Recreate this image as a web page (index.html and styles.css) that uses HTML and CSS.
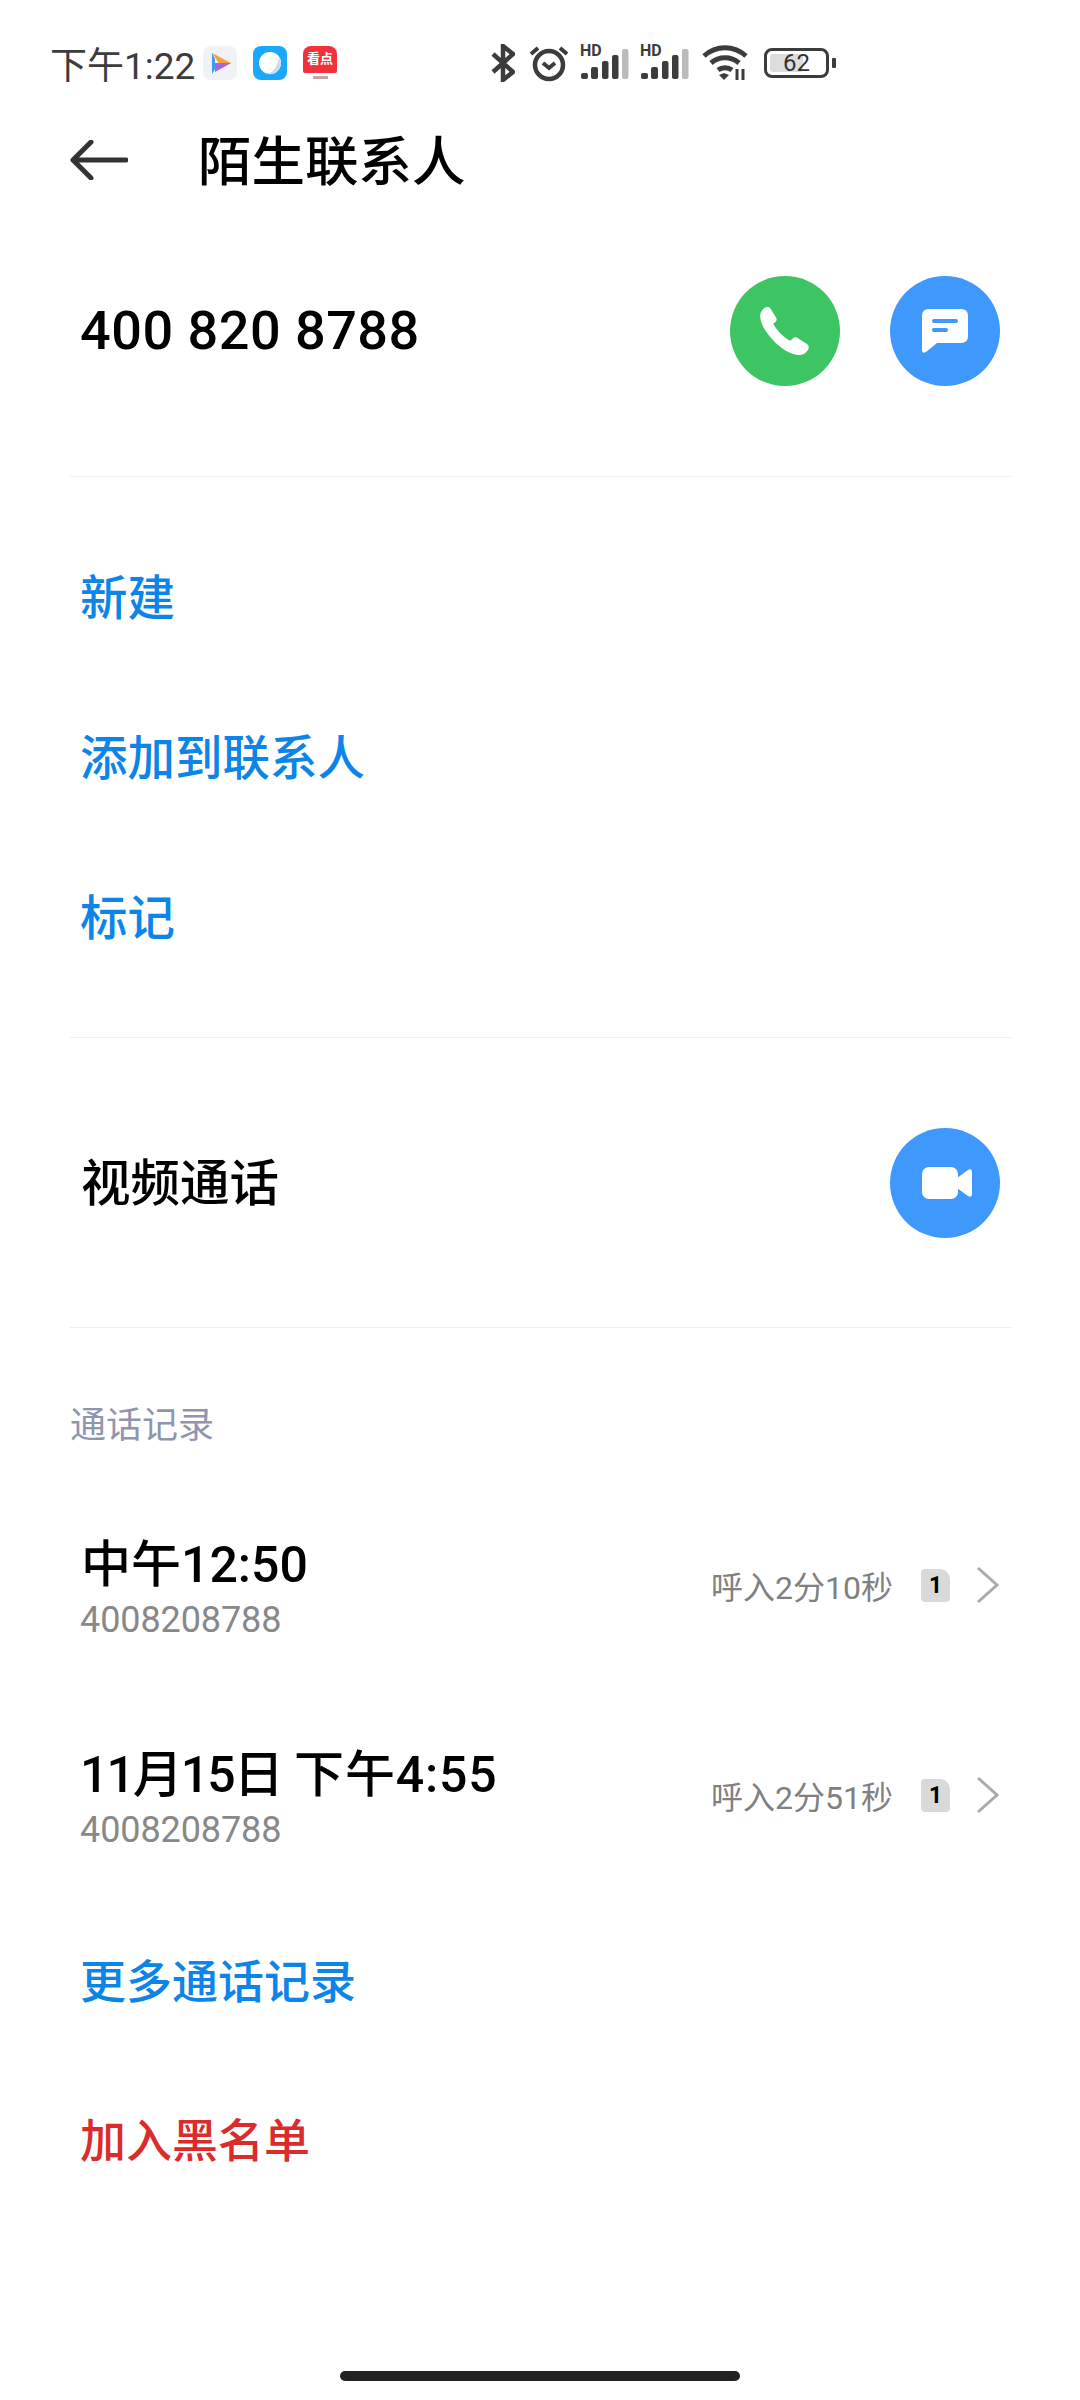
FILE: index.html
```html
<!DOCTYPE html>
<html lang="zh-CN">
<head>
    <meta charset="UTF-8">
    <meta name="viewport" content="width=device-width, initial-scale=1.0">
    <title>陌生联系人</title>
    <link rel="stylesheet" href="styles.css">
</head>
<body>
    <div class="page">
        <div class="status-bar">
            <span class="status-time">下午1:22</span>
            <svg class="app-icon play" width="34" height="34" viewBox="0 0 34 34">
                <rect width="34" height="34" rx="8" fill="#f0f2f5"/>
                <path d="M9 7l19 10-9 5z" fill="#f7a13c"/>
                <path d="M9 7l3 6v10l-3 5z" fill="#3aa0ee"/>
                <path d="M12 17l16 0-16 9z" fill="#a266ee"/>
            </svg>
            <svg class="app-icon browser" width="34" height="34" viewBox="0 0 34 34">
                <rect width="34" height="34" rx="8" fill="#1aa8fb"/>
                <circle cx="17" cy="17" r="11" fill="#fff"/>
                <path d="M26 11a11 11 0 0 1-11 17c6-2 10-9 11-17z" fill="#c5def3"/>
            </svg>
            <div class="app-icon news">
                <span class="news-top">看点</span>
                <span class="news-bottom"></span>
            </div>

            <div class="status-icons">
                <svg width="24" height="38" viewBox="0 0 24 38" fill="none" stroke="#3c3c3c" stroke-width="4.5">
                    <path d="M2 10l20 18-10 8V2l10 8L2 28"/>
                </svg>
                <svg class="alarm" width="40" height="38" viewBox="0 0 40 38" fill="none" stroke="#3c3c3c" stroke-width="4.5">
                    <circle cx="20" cy="21" r="14"/>
                    <path d="M14 19l6 5 6-5" stroke-width="4"/>
                    <path d="M2 10l7-6M38 10l-7-6" stroke-width="4"/>
                </svg>
                <div class="signal">
                    <span class="hd">HD</span>
                    <svg width="48" height="30" viewBox="0 0 48 30">
                        <rect x="0" y="24" width="7" height="6" rx="2" fill="#3c3c3c"/>
                        <rect x="10" y="18" width="7" height="12" rx="2" fill="#3c3c3c"/>
                        <rect x="21" y="12" width="6.5" height="18" rx="2" fill="#3c3c3c"/>
                        <rect x="31" y="6" width="6.5" height="24" rx="2" fill="#3c3c3c"/>
                        <rect x="41" y="0" width="6.5" height="30" rx="2" fill="#bbb"/>
                    </svg>
                </div>
                <div class="signal">
                    <span class="hd">HD</span>
                    <svg width="48" height="30" viewBox="0 0 48 30">
                        <rect x="0" y="24" width="7" height="6" rx="2" fill="#3c3c3c"/>
                        <rect x="10" y="18" width="7" height="12" rx="2" fill="#3c3c3c"/>
                        <rect x="21" y="12" width="6.5" height="18" rx="2" fill="#3c3c3c"/>
                        <rect x="31" y="6" width="6.5" height="24" rx="2" fill="#3c3c3c"/>
                        <rect x="41" y="0" width="6.5" height="30" rx="2" fill="#bbb"/>
                    </svg>
                </div>
                <svg class="wifi" width="46" height="36" viewBox="0 0 46 36" fill="none" stroke="#3c3c3c" stroke-width="5">
                    <path d="M2 11c12-11 30-11 42 0"/>
                    <path d="M9 18c8-7 20-7 28 0"/>
                    <path d="M16 25c4-3 10-3 14 0"/>
                    <path d="M17 30l5-2 5 2-5 5z" fill="#3c3c3c" stroke="none"/>
                    <path d="M35 24v11M41 24v11" stroke-width="3"/>
                </svg>
                <div class="battery">
                    <div class="battery-body">
                        <div class="battery-fill"></div>
                        <span class="battery-text">62</span>
                    </div>
                    <div class="battery-cap"></div>
                </div>
            </div>
        </div>

        <div class="header">
            <svg class="back" width="58" height="40" viewBox="0 0 58 40" fill="none" stroke="#333" stroke-width="5" stroke-linecap="round" stroke-linejoin="round">
                <path d="M21 2L3 20l18 18M3 20h53"/>
            </svg>
            <h1 class="title">陌生联系人</h1>
        </div>

        <div class="number-row">
            <span class="number">400 820 8788</span>
            <div class="circle green">
                <svg width="50" height="50" viewBox="0 0 51 51">
                    <path d="M2.5 4C5 .5 9 0 11 3l5.5 9c1 2 .5 3.500-1.500 5l-1.500 1c3 6 9.500 13 17.500 17.500l2.500-2.500c1.500-1.200 3-1.300 4.500-.5l9.500 6c2.500 1.500 3 4.500 1 7-2.500 3.500-6 5-10 4.500-9.500-1-19.500-8.500-26.500-16.500C5.500 26 .5 18 .2 11 0 8 1 6 2.500 4z" fill="#fff"/>
                </svg>
            </div>
            <div class="circle blue">
                <svg width="46" height="44" viewBox="0 0 46 44">
                    <path d="M7 0h32q7 0 7 7v20q0 7-7 7H15L4 43q-4 2-4-2V7q0-7 7-7z" fill="#fff"/>
                    <path d="M12 12h22M12 21h12" stroke="#3f98fb" stroke-width="4" stroke-linecap="round"/>
                </svg>
            </div>
        </div>

        <div class="links section">
            <div class="link-row blue-text large">新建</div>
            <div class="link-row blue-text large">添加到联系人</div>
            <div class="link-row blue-text large">标记</div>
        </div>

        <div class="video-row section">
            <span class="video-label">视频通话</span>
            <div class="circle blue">
                <svg class="video-icon" width="50" height="32" viewBox="0 0 50 32">
                    <rect width="36" height="32" rx="7" fill="#fff"/>
                    <path d="M35 11l11-8q4-2 4 2v22q0 4-4 2l-11-8z" fill="#fff"/>
                </svg>
            </div>
        </div>

        <div class="history section">
            <div class="history-title">通话记录</div>

            <div class="call-row">
                <div class="call-info">
                    <div class="call-time first">中午12:50</div>
                    <div class="call-number">4008208788</div>
                </div>
                <span class="call-duration">呼入2分10秒</span>
                <div class="sim">1</div>
                <svg class="chevron" width="24" height="38" viewBox="0 0 24 38" fill="none" stroke="#aaa" stroke-width="3">
                    <path d="M2 2l19 17L2 36"/>
                </svg>
            </div>

            <div class="call-row">
                <div class="call-info">
                    <div class="call-time"><span class="call-date">11月15日</span> <span class="call-clock">下午4:55</span></div>
                    <div class="call-number">4008208788</div>
                </div>
                <span class="call-duration">呼入2分51秒</span>
                <div class="sim">1</div>
                <svg class="chevron" width="24" height="38" viewBox="0 0 24 38" fill="none" stroke="#aaa" stroke-width="3">
                    <path d="M2 2l19 17L2 36"/>
                </svg>
            </div>

            <div class="link-row blue-text">更多通话记录</div>
            <div class="link-row red-text">加入黑名单</div>
        </div>

        <div class="home-bar"></div>
    </div>
</body>
</html>
```

FILE: styles.css
```css
* {
    box-sizing: border-box;
}
body {
    margin: 0;
    background-color: #fff;
    font-family: Roboto, "Noto Sans CJK SC", sans-serif;
    color: #000;
}
.page {
    width: 1080px;
    height: 2400px;
    display: flex;
    flex-direction: column;
    overflow: hidden;
}

/* status bar */
.status-bar {
    height: 126px;
    padding-left: 50px;
    display: flex;
    align-items: center;
}
.status-time {
    font-size: 37px;
    color: #3c3c3c;
    width: 153px;
}
.app-icon {
    width: 34px;
    height: 34px;
    margin-right: 16px;
    flex-shrink: 0;
}
.news {
    display: flex;
    flex-direction: column;
    align-items: center;
}
.news-top {
    width: 100%;
    height: 27px;
    background-color: #f1323c;
    border-radius: 8px 8px 2px 2px;
    font-size: 13px;
    line-height: 25px;
    font-weight: 700;
    text-align: center;
    color: #fff;
}
.news-bottom {
    width: 15px;
    height: 3px;
    margin-top: 3px;
    background-color: #c9a5a8;
}
.status-icons {
    margin-left: 138px;
    display: flex;
    align-items: center;
    color: #3c3c3c;
}
.alarm {
    margin-left: 14px;
}
.signal {
    margin-left: 11px;
    width: 49px;
    height: 36px;
    position: relative;
}
.signal + .signal {
    margin-left: 11px;
}
.signal svg {
    position: absolute;
    left: 1px;
    top: 4px;
}
.hd {
    position: absolute;
    left: 0;
    top: -3px;
    font-size: 16px;
    line-height: 18px;
    font-weight: 700;
}
.wifi {
    margin-left: 13px;
}
.battery {
    margin-left: 16px;
    display: flex;
    align-items: center;
}
.battery-body {
    width: 65px;
    height: 30px;
    border: 3px solid #3c3c3c;
    border-radius: 8px;
    padding: 3px;
    position: relative;
}
.battery-fill {
    width: 62%;
    height: 100%;
    background-color: #ddd;
    border-radius: 3px;
}
.battery-text {
    position: absolute;
    left: 0;
    right: 0;
    top: 0;
    text-align: center;
    font-size: 24px;
    line-height: 24px;
    color: #333;
}
.battery-cap {
    width: 4px;
    height: 10px;
    margin-left: 3px;
    background-color: #3c3c3c;
    border-radius: 1px;
}

/* header */
.header {
    height: 68px;
    padding-left: 70px;
    display: flex;
    align-items: center;
}
.title {
    margin: 0 0 6px 70px;
    font-size: 53.5px;
    font-weight: 500;
}

/* number row */
.number-row {
    height: 282px;
    padding: 0 80px 9px;
    display: flex;
    align-items: center;
}
.number {
    font-size: 54px;
    font-weight: 500;
    margin-right: auto;
    letter-spacing: .5px;
}
.circle {
    width: 110px;
    height: 110px;
    border-radius: 50%;
    display: flex;
    align-items: center;
    justify-content: center;
    flex-shrink: 0;
}
.green {
    background-color: #3ec563;
}
.blue {
    background-color: #3f98fb;
    margin-left: 50px;
}

/* sections */
.section {
    border-top: 1px solid #eee;
    margin: 0 69px 0 70px;
}
.links {
    padding: 40px 0;
}
.link-row {
    height: 160px;
    display: flex;
    align-items: center;
    padding: 0 0 5px 10px;
    font-size: 46px;
    font-weight: 500;
}
.large {
    font-size: 47.5px;
}
.blue-text {
    color: #0d84e8;
}
.red-text {
    color: #dc2b2b;
    height: 158px;
}
.video-row {
    height: 290px;
    display: flex;
    align-items: center;
    justify-content: space-between;
    padding: 0 11px 0 11px;
}
.video-label {
    font-size: 49.5px;
    font-weight: 500;
    margin-bottom: 6px;
}
.video-icon {
    margin-left: 4px;
}

/* history */
.history-title {
    margin-top: 70px;
    margin-bottom: 26px;
    font-size: 36px;
    line-height: 56px;
    color: #8e95ae;
}
.call-row {
    height: 210px;
    display: flex;
    align-items: center;
    padding-left: 10px;
}
.call-info {
    margin-right: auto;
    margin-top: 6px;
}
.call-time {
    font-size: 50px;
    line-height: 60px;
    font-weight: 500;
    margin-bottom: 4px;
}
.call-time.first {
    padding-left: 1px;
}
.call-date {
    letter-spacing: -2px;
}
.call-clock {
    letter-spacing: .8px;
}
.call-number {
    font-size: 36px;
    line-height: 42px;
    color: #888;
    letter-spacing: -.1px;
}
.call-duration {
    font-size: 32px;
    color: #808080;
}
.sim {
    width: 29px;
    height: 33px;
    margin-left: 28px;
    background-color: #d9d9d9;
    border-radius: 4px 10px 4px 4px;
    font-size: 23px;
    line-height: 33px;
    font-weight: 700;
    text-align: center;
}
.chevron {
    margin: 0 11px 0 26px;
}

.home-bar {
    width: 400px;
    height: 10px;
    margin: auto auto 19px;
    background-color: #222;
    border-radius: 5px;
}
```
